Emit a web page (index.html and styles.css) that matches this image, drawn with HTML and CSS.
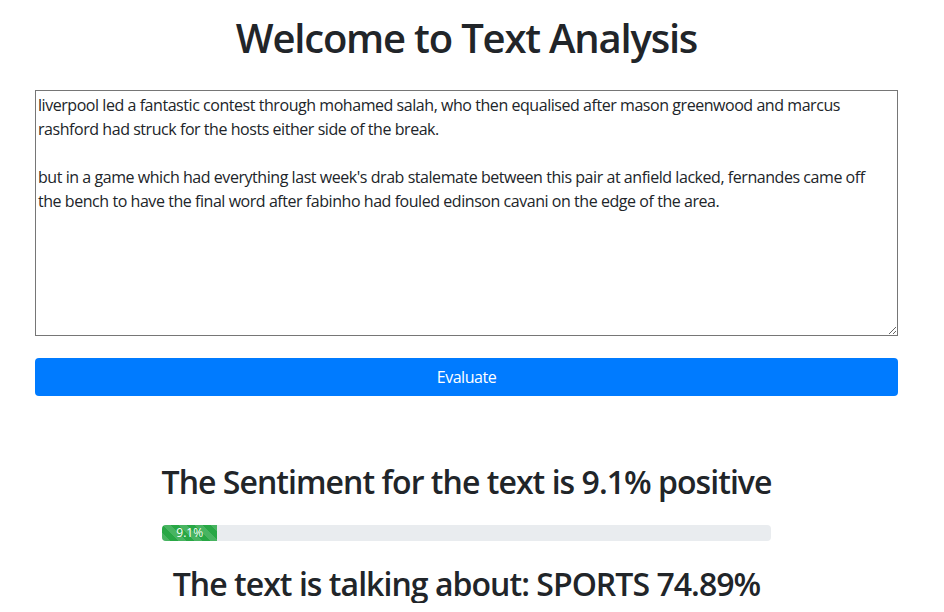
FILE: index.html
```html
<!DOCTYPE html>
<html>
<head>
<meta charset="utf-8">
<title>Text Analysis</title>
<link rel="stylesheet" href="styles.css">
</head>
<body>
<div class="page">
  <h1 class="title">Welcome to Text Analysis</h1>
  <form class="form">
    <textarea class="input" rows="10">liverpool led a fantastic contest through mohamed salah, who then equalised after mason greenwood and marcus rashford had struck for the hosts either side of the break.

but in a game which had everything last week's drab stalemate between this pair at anfield lacked, fernandes came off the bench to have the final word after fabinho had fouled edinson cavani on the edge of the area.</textarea>
    <button type="button" class="btn">Evaluate</button>
  </form>
  <section class="results">
    <h2 class="result-title">The Sentiment for the text is 9.1% positive</h2>
    <div class="progress">
      <div class="progress-bar" style="width: 9.1%">9.1%</div>
    </div>
    <h2 class="result-title topic">The text is talking about: SPORTS 74.89%</h2>
  </section>
</div>
</body>
</html>
```
FILE: styles.css
```css
html, body {
  margin: 0;
  padding: 0;
  background: #fff;
}
body {
  font-family: "Open Sans", "Noto Sans", sans-serif;
  font-size: 16px;
  line-height: 1.5;
  color: #212529;
  letter-spacing: -0.028em;
}
.page {
  width: 863px;
  margin-left: 35px;
  display: flex;
  flex-direction: column;
}
.title {
  margin: 14px 0 28px;
  font-size: 40px;
  font-weight: 600;
  line-height: 48px;
  text-align: center;
  letter-spacing: -0.03em;
}
.form {
  display: flex;
  flex-direction: column;
  margin: 0;
}
.input {
  box-sizing: border-box;
  width: 100%;
  height: 246px;
  padding: 2px 14px 2px 2px;
  border: 1px solid #767676;
  font-family: inherit;
  font-size: 16px;
  line-height: 24px;
  letter-spacing: -0.028em;
  color: #212529;
  margin: 0;
}
.btn {
  margin-top: 22px;
  height: 38px;
  border: none;
  border-radius: 4px;
  background: #007bff;
  color: #fff;
  font-family: inherit;
  font-size: 16px;
  line-height: 24px;
  letter-spacing: -0.028em;
}
.results {
  width: 609px;
  align-self: center;
  margin-top: 67px;
  display: flex;
  flex-direction: column;
  align-items: center;
}
.result-title {
  margin: 0;
  font-size: 32px;
  font-weight: 600;
  line-height: 38px;
  text-align: center;
  white-space: nowrap;
  letter-spacing: -0.03em;
}
.progress {
  align-self: stretch;
  margin-top: 24px;
  height: 16px;
  border-radius: 4px;
  background: #e9ecef;
  display: flex;
  overflow: hidden;
}
.progress-bar {
  background-color: #28a745;
  background-image: linear-gradient(45deg, rgba(255,255,255,.15) 25%, transparent 25%, transparent 50%, rgba(255,255,255,.15) 50%, rgba(255,255,255,.15) 75%, transparent 75%, transparent);
  background-size: 16px 16px;
  color: #fff;
  font-size: 12px;
  line-height: 16px;
  text-align: center;
  white-space: nowrap;
  letter-spacing: 0;
}
.topic {
  margin-top: 24px;
}
```
